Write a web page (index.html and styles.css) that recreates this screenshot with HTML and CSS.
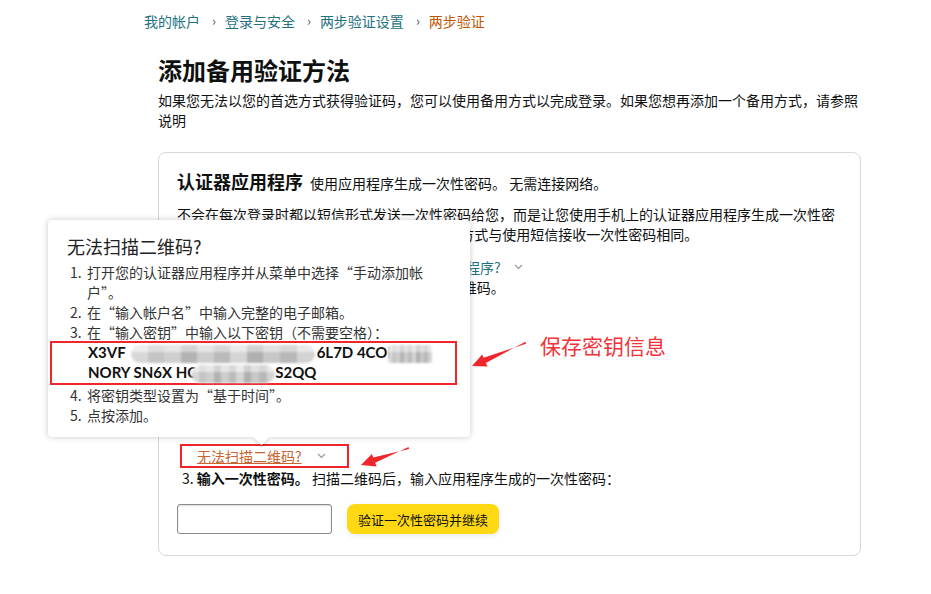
FILE: index.html
```html
<!DOCTYPE html>
<html lang="zh-CN">

<head>
    <meta charset="UTF-8">
    <meta name="viewport" content="width=device-width, initial-scale=1.0">
    <title>两步验证</title>
    <link rel="stylesheet" href="styles.css">
</head>

<body>
    <div class="page">
        <nav class="crumbs">
            <a href="#">我的帐户</a>
            <span class="sep">›</span>
            <a href="#">登录与安全</a>
            <span class="sep">›</span>
            <a href="#">两步验证设置</a>
            <span class="sep">›</span>
            <span class="current">两步验证</span>
        </nav>

        <main class="content">
            <h1>添加备用验证方法</h1>
            <p class="lead">如果您无法以您的首选方式获得验证码，您可以使用备用方式以完成登录。如果您想再添加一个备用方式，请参照说明</p>

            <section class="card">
                <div class="card-head">
                    <h2>认证器应用程序</h2>
                    <span>使用应用程序生成一次性密码。 无需连接网络。</span>
                </div>
                <p class="card-text">不会在每次登录时都以短信形式发送一次性密码给您，而是让您使用手机上的认证器应用程序生成一次性密码。 即使手机没有网络连接也可以使用，登录方式与使用短信接收一次性密码相同。</p>

                <ol class="steps">
                    <li>1. 安装认证器应用程序。 <a href="#" class="link">如何获取认证器应用程序?</a>
                        <svg class="chev" width="9" height="6" viewBox="0 0 9 6"><path d="M1 1l3.5 3.5L8 1" fill="none" stroke="#999" stroke-width="1.2"/></svg>
                    </li>
                    <li>2. 打开认证器应用程序，使用它扫描下方的二维码。</li>
                    <li class="qr"></li>
                    <li class="cant-scan">
                        <span class="mark">
                            <a href="#" class="link-warn">无法扫描二维码?</a>
                            <svg class="chev" width="9" height="6" viewBox="0 0 9 6"><path d="M1 1l3.5 3.5L8 1" fill="none" stroke="#999" stroke-width="1.2"/></svg>
                        </span>
                    </li>
                    <li>3. <b>输入一次性密码。</b> 扫描二维码后，输入应用程序生成的一次性密码：</li>
                </ol>

                <div class="verify">
                    <input type="text" class="otp-input">
                    <button class="verify-btn">验证一次性密码并继续</button>
                </div>

                <div class="popover">
                    <h3>无法扫描二维码?</h3>
                    <ol class="pop-list">
                        <li><span class="num">1.</span><span>打开您的认证器应用程序并从菜单中选择“手动添加帐户”。</span></li>
                        <li><span class="num">2.</span><span>在“输入帐户名”中输入完整的电子邮箱。</span></li>
                        <li><span class="num">3.</span><span>在“输入密钥”中输入以下密钥（不需要空格）：</span></li>
                        <li class="key">
                            <div>X3VF<span class="blur b1"></span>6L7D 4COF<span class="blur b2"></span></div>
                            <div>NORY SN6X HC<span class="blur b3"></span>S2QQ</div>
                        </li>
                        <li><span class="num">4.</span><span>将密钥类型设置为“基于时间”。</span></li>
                        <li><span class="num">5.</span><span>点按添加。</span></li>
                    </ol>
                </div>
            </section>
        </main>
    </div>

    <!-- annotations -->
    <svg class="annot" width="931" height="594" viewBox="0 0 931 594">
        <polygon fill="#f0262b" points="525.5,341.8 485.8,362.9 487.6,366.6 472,366 482.2,354.4 483.6,357.8 526,343.8"/>
        <polygon fill="#f0262b" points="408.5,446.9 375.1,462.8 376.6,466.5 361,465 371.9,454 373.2,457.6 409,449"/>
    </svg>
    <div class="note">保存密钥信息</div>
</body>

</html>
```

FILE: styles.css
```css
* {
    margin: 0;
    padding: 0;
    box-sizing: border-box;
}

body {
    font-family: "Noto Sans CJK SC", "Noto Sans", sans-serif;
    background: #fff;
    color: #0f1111;
    font-size: 14px;
    line-height: 20px;
    width: 931px;
    height: 594px;
    overflow: hidden;
    position: relative;
}

a {
    text-decoration: none;
}

.page {
    padding: 11px 0 0 144px;
}

/* breadcrumb */
.crumbs {
    display: flex;
    align-items: center;
    font-size: 14px;
    line-height: 20px;
}

.crumbs a {
    color: #23717f;
}

.crumbs .sep {
    color: #555;
    font-size: 13px;
    margin: 0 9px 0 12px;
}

.crumbs .current {
    color: #c45500;
}

.content {
    width: 703px;
    margin: 23px 0 0 14px;
}

.content h1 {
    font-size: 24px;
    line-height: 32px;
    font-weight: 700;
}

.lead {
    margin-top: 4px;
    font-size: 14px;
    line-height: 20px;
}

/* card */
.card {
    position: relative;
    margin-top: 22px;
    border: 1px solid #d5d9d9;
    border-radius: 8px;
    padding: 17px 18px 21px;
}

.card-head {
    display: flex;
    align-items: baseline;
    gap: 7px;
    line-height: 22px;
}

.card-head h2 {
    font-size: 18px;
    font-weight: 700;
}

.card-text {
    margin-top: 10px;
}

.steps {
    list-style: none;
    margin-top: 13px;
}

.steps li {
    padding-left: 5px;
}

.link {
    color: #23717f;
}

.chev {
    margin-left: 10px;
    vertical-align: 3px;
}

.steps .qr {
    height: 147px;
}

.steps .cant-scan {
    padding-left: 3px;
    line-height: 20px;
}

.mark {
    display: inline-block;
    border: 2px solid #f0262b;
    padding: 0 20px 0 15px;
    width: 169px;
}

.link-warn {
    color: #c7642f;
    text-decoration: underline;
}

.mark .chev {
    margin-left: 12px;
}

.steps b {
    font-weight: 700;
}

.verify {
    display: flex;
    gap: 15px;
    margin-top: 16px;
}

.otp-input {
    width: 155px;
    height: 30px;
    border: 1px solid #888c8c;
    border-radius: 3px;
    box-shadow: 0 1px 2px rgba(15, 17, 17, 0.15) inset;
}

.verify-btn {
    height: 30px;
    width: 152px;
    background: #ffd814;
    border: none;
    border-radius: 8px;
    font-family: inherit;
    font-size: 13px;
    color: #0f1111;
    box-shadow: 0 2px 5px rgba(213, 217, 217, 0.5);
}

/* popover */
.popover {
    position: absolute;
    left: -111px;
    top: 67px;
    width: 422px;
    height: 217px;
    background: #fff;
    border-radius: 4px;
    box-shadow: 0 0 6px rgba(0, 0, 0, 0.22);
    padding: 14px 19px 0;
}

.popover::after {
    content: "";
    position: absolute;
    left: 208px;
    bottom: -6px;
    width: 11px;
    height: 11px;
    background: #fff;
    transform: rotate(45deg);
    box-shadow: 2px 2px 3px rgba(0, 0, 0, 0.12);
}

.popover h3 {
    font-size: 18px;
    line-height: 24px;
    font-weight: 400;
    color: #222;
}

.pop-list {
    list-style: none;
    margin-top: 4px;
    padding-left: 3px;
    width: 362px;
    color: #333;
}

.pop-list li {
    display: flex;
}

.pop-list .num {
    flex: none;
    width: 17px;
}

.pop-list .key {
    display: block;
    margin: -1px 0 0 -20px;
    width: 407px;
    border: 2px solid #f0262b;
    padding-left: 36px;
    font-family: "Lato", "Noto Sans", sans-serif;
    font-weight: 700;
    font-size: 15px;
    line-height: 19px;
    color: #111;
}

.key div {
    white-space: nowrap;
}

.blur {
    display: inline-block;
    vertical-align: middle;
    height: 18px;
    border-radius: 9px;
    filter: blur(1px);
    background:
        linear-gradient(180deg, rgba(255, 255, 255, 0.35) 0 40%, rgba(0, 0, 0, 0.05) 40% 100%),
        linear-gradient(90deg, #e4e4e4 0 9%, #cfcfcf 9% 18%, #dadada 18% 27%, #bdbdbd 27% 36%, #d8d8d8 36% 45%, #c4c4c4 45% 54%, #e0e0e0 54% 63%, #b9b9b9 63% 72%, #d2d2d2 72% 81%, #c2c2c2 81% 90%, #dedede 90% 100%);
}

.b1 {
    width: 184px;
    margin: 0 2px 0 5px;
}

.b2 {
    width: 44px;
    margin-left: -8px;
    border-radius: 2px;
}

.b3 {
    width: 84px;
    margin: 0 0 0 -6px;
}

/* annotations */
.annot {
    position: absolute;
    left: 0;
    top: 0;
    pointer-events: none;
}

.note {
    position: absolute;
    left: 540px;
    top: 331px;
    font-size: 21px;
    line-height: 28px;
    color: #f0343a;
}
```
